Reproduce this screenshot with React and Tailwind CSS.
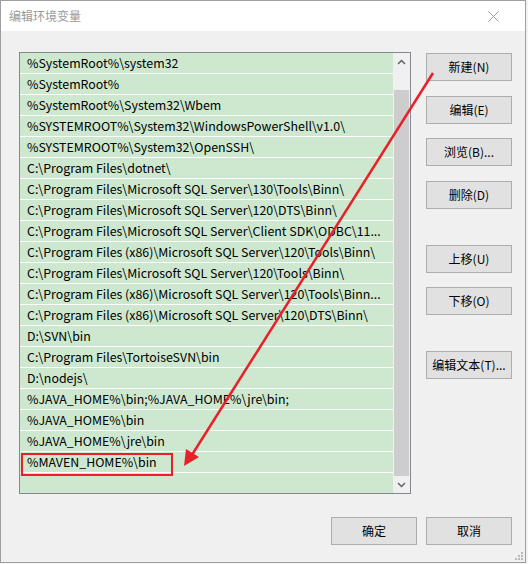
import React from "react";

const items = [
  "%SystemRoot%\\system32",
  "%SystemRoot%",
  "%SystemRoot%\\System32\\Wbem",
  "%SYSTEMROOT%\\System32\\WindowsPowerShell\\v1.0\\",
  "%SYSTEMROOT%\\System32\\OpenSSH\\",
  "C:\\Program Files\\dotnet\\",
  "C:\\Program Files\\Microsoft SQL Server\\130\\Tools\\Binn\\",
  "C:\\Program Files\\Microsoft SQL Server\\120\\DTS\\Binn\\",
  "C:\\Program Files\\Microsoft SQL Server\\Client SDK\\ODBC\\11...",
  "C:\\Program Files (x86)\\Microsoft SQL Server\\120\\Tools\\Binn\\",
  "C:\\Program Files\\Microsoft SQL Server\\120\\Tools\\Binn\\",
  "C:\\Program Files (x86)\\Microsoft SQL Server\\120\\Tools\\Binn...",
  "C:\\Program Files (x86)\\Microsoft SQL Server\\120\\DTS\\Binn\\",
  "D:\\SVN\\bin",
  "C:\\Program Files\\TortoiseSVN\\bin",
  "D:\\nodejs\\",
  "%JAVA_HOME%\\bin;%JAVA_HOME%\\jre\\bin;",
  "%JAVA_HOME%\\bin",
  "%JAVA_HOME%\\jre\\bin",
  "%MAVEN_HOME%\\bin",
];

function Btn({ children, className = "" }) {
  return (
    <div
      className={
        "w-[86px] h-[28px] flex items-center justify-center border border-[#adadad] bg-[#e1e1e1] text-[12px] text-black " +
        className
      }
    >
      {children}
    </div>
  );
}

export default function App() {
  return (
    <div
      className="relative w-[528px] h-[564px] bg-[#f3f3f3] overflow-hidden"
      style={{ fontFamily: '"Noto Sans CJK SC", "Noto Sans", sans-serif' }}
    >
      <div className="w-[526px] h-[563px] border border-[#9e9e9e] bg-[#f0f0f0] flex flex-col">
        {/* title bar */}
        <div className="h-[30px] bg-white flex items-center justify-between pl-[8px] pr-[26px] shrink-0">
          <span className="text-[12px] text-[#9a9a9a] leading-none">编辑环境变量</span>
          <svg width="11" height="11" viewBox="0 0 11 11">
            <path d="M0.5 0.5 L10.5 10.5 M10.5 0.5 L0.5 10.5" stroke="#999" strokeWidth="1" fill="none" />
          </svg>
        </div>
        {/* body */}
        <div className="flex-1 flex flex-col pl-[18px] pt-[21px]">
          <div className="flex">
            {/* list */}
            <div className="w-[392px] h-[442px] border border-[#828790] bg-[#cde8cf] flex">
              <div className="flex-1 flex flex-col">
                {items.map((t, i) => (
                  <div
                    key={i}
                    className="h-[21px] shrink-0 border-b border-white flex items-center pl-[7px] pt-[1px] text-[12.4px] text-black whitespace-nowrap overflow-hidden"
                  >
                    {t}
                  </div>
                ))}
              </div>
              {/* scrollbar */}
              <div className="w-[17px] bg-[#f0f0f0] flex flex-col">
                <div className="h-[17px] flex items-center justify-center">
                  <svg width="9" height="6" viewBox="0 0 9 6">
                    <path d="M1 5 L4.5 1.5 L8 5" stroke="#606060" strokeWidth="1.5" fill="none" />
                  </svg>
                </div>
                <div className="h-[20px]" />
                <div className="flex-1 bg-[#cdcdcd] mx-[1px]" />
                <div className="h-[17px] flex items-center justify-center">
                  <svg width="9" height="6" viewBox="0 0 9 6">
                    <path d="M1 1 L4.5 4.5 L8 1" stroke="#606060" strokeWidth="1.5" fill="none" />
                  </svg>
                </div>
              </div>
            </div>
            {/* side buttons */}
            <div className="flex flex-col ml-[15px] pt-[1px]">
              <Btn>新建(N)</Btn>
              <Btn className="mt-[15px]">编辑(E)</Btn>
              <Btn className="mt-[14px]">浏览(B)...</Btn>
              <Btn className="mt-[15px]">删除(D)</Btn>
              <Btn className="mt-[36px]">上移(U)</Btn>
              <Btn className="mt-[14px]">下移(O)</Btn>
              <Btn className="mt-[36px]">编辑文本(T)...</Btn>
            </div>
          </div>
          <div className="flex justify-end gap-[9px] mt-[23px] pr-[13px]">
            <Btn>确定</Btn>
            <Btn>取消</Btn>
          </div>
        </div>
      </div>

      {/* highlight box */}
      <div className="absolute left-[21px] top-[453px] w-[152px] h-[23px] border-2 border-[#e8202a]" />

      {/* arrow */}
      <svg className="absolute left-0 top-0" width="528" height="564" viewBox="0 0 528 564">
        <line x1="433" y1="73" x2="190" y2="458" stroke="#e8202a" strokeWidth="2.5" />
        <path d="M184 466 L186 449 L199 457 Z" fill="#e8202a" />
      </svg>

      {/* resize grip */}
      <svg className="absolute left-[514px] top-[551px]" width="10" height="10" viewBox="0 0 10 10">
        <rect x="7" y="1" width="2" height="2" fill="#b8b8b8" />
        <rect x="4" y="4" width="2" height="2" fill="#b8b8b8" />
        <rect x="7" y="4" width="2" height="2" fill="#b8b8b8" />
        <rect x="1" y="7" width="2" height="2" fill="#b8b8b8" />
        <rect x="4" y="7" width="2" height="2" fill="#b8b8b8" />
        <rect x="7" y="7" width="2" height="2" fill="#b8b8b8" />
      </svg>
    </div>
  );
}
